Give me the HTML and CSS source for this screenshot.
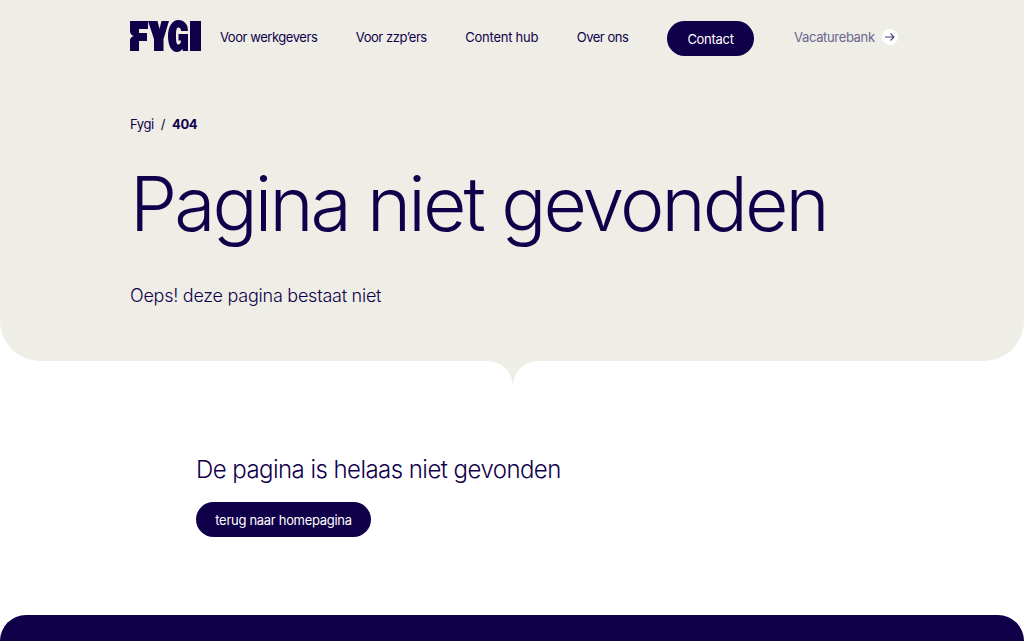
FILE: index.html
```html
<!DOCTYPE html>
<html lang="nl">
<head>
<meta charset="utf-8">
<title>Pagina niet gevonden</title>
<link rel="stylesheet" href="styles.css">
</head>
<body>
<section class="hero">
  <div class="container">
    <header class="nav">
      <a class="logo" href="#" aria-label="Fygi">
        <svg width="71" height="32" viewBox="0 0 71 32" fill="#10004a">
          <path d="M0 1H18V9H9V13H17V21H9V31H0V20C0 18 2 16.500 4 16C2 15.500 0 14 0 11Z"/>
          <path d="M18 1H27.500L29.500 9L31.500 1H39L33.500 19V31H24V19Z"/>
          <path d="M48.500 0C54 0 58 4 58 11H51C51 9 50 7.500 48.500 7.500C46.500 7.500 46 10 46 16C46 22 46.500 24.500 48.500 24.500C50 24.500 50.800 23 51 20.500H48.500V14H58V31H53L52.500 29C51 31 49 32 47 32C41 32 38 25 38 16C38 7 42 0 48.500 0Z"/>
          <rect x="60" y="1" width="11" height="30"/>
        </svg>
      </a>
      <a class="nav-link" href="#">Voor werkgevers</a>
      <a class="nav-link" href="#">Voor zzp’ers</a>
      <a class="nav-link nav-link-open" href="#">Content hub</a>
      <a class="nav-link" href="#">Over ons</a>
      <a class="btn btn-nav" href="#">Contact</a>
      <a class="vacature" href="#">Vacaturebank
        <span class="arrow">
          <svg width="11" height="10" viewBox="0 0 11 10" fill="none" stroke="#4a4278" stroke-width="1.100"><path d="M1 5H10M6.500 1.500L10 5L6.500 8.500"/></svg>
        </span>
      </a>
    </header>
    <nav class="crumbs"><a href="#">Fygi</a><span class="sep">/</span><strong>404</strong></nav>
    <h1>Pagina niet gevonden</h1>
    <p class="lead">Oeps! deze pagina bestaat niet</p>
  </div>
  <svg class="notch" width="56" height="24" viewBox="0 0 56 24"><path d="M0 0H56C40 0 30 8 28 24C26 8 16 0 0 0Z" fill="#eeede6"/></svg>
</section>
<main class="content">
  <h2>De pagina is helaas niet gevonden</h2>
  <a class="btn btn-main" href="#">terug naar homepagina</a>
</main>
<footer class="footer"></footer>
</body>
</html>
```
FILE: styles.css
```css
* { box-sizing: border-box; }
html, body { margin: 0; padding: 0; }
body {
  font-family: Inter, "Liberation Sans", sans-serif;
  color: #10004a;
  background: #fff;
  height: 641px;
  overflow: hidden;
}
a { color: inherit; text-decoration: none; }
.hero {
  position: relative;
  height: 361px;
  background: #eeede6;
  border-radius: 0 0 40px 40px;
}
.container { padding-left: 130px; }
.nav {
  display: flex;
  align-items: center;
  height: 77px;
}
.logo { display: flex; width: 90px; margin-top: -5px; }
.nav-link { font-size: 13px; letter-spacing: -0.45px; margin-right: 38.5px; margin-top: -4px; }
.nav-link-open { letter-spacing: -0.25px; }
.btn {
  display: inline-flex;
  align-items: center;
  justify-content: center;
  background: #10004a;
  color: #fff;
  border-radius: 18px;
  height: 35px;
  font-size: 13px;
  letter-spacing: -0.3px;
}
.btn-nav { width: 87px; margin-right: 40px; }
.vacature {
  display: flex;
  align-items: center;
  gap: 7px;
  font-size: 13px;
  letter-spacing: -0.35px;
  color: #6b6590;
  margin-top: -4px;
}
.arrow {
  display: flex;
  align-items: center;
  justify-content: center;
  width: 16px;
  height: 16px;
  background: #fff;
  border-radius: 50%;
}
.crumbs { font-size: 13px; letter-spacing: -0.4px; margin-top: 39px; line-height: 16px; }
.sep { margin: 0 7px; }
.crumbs strong { font-weight: 700; }
h1 {
  margin: 27px 0 0;
  font-size: 75px;
  font-weight: 300;
  line-height: 90px;
  letter-spacing: -2.9px;
}
.lead { margin: 35px 0 0; font-size: 18px; letter-spacing: -0.25px; line-height: 24px; font-weight: 300; }
.notch { position: absolute; left: 485px; top: 361px; display: block; }
.content { padding: 94px 0 0 196px; }
h2 { margin: 0 0 17px; font-size: 24px; letter-spacing: -0.55px; line-height: 30px; font-weight: 300; }
.btn-main { width: 175px; }
.footer {
  position: absolute;
  left: 0;
  right: 0;
  top: 615px;
  height: 26px;
  background: #10004a;
  border-radius: 26px 26px 0 0;
}
```
